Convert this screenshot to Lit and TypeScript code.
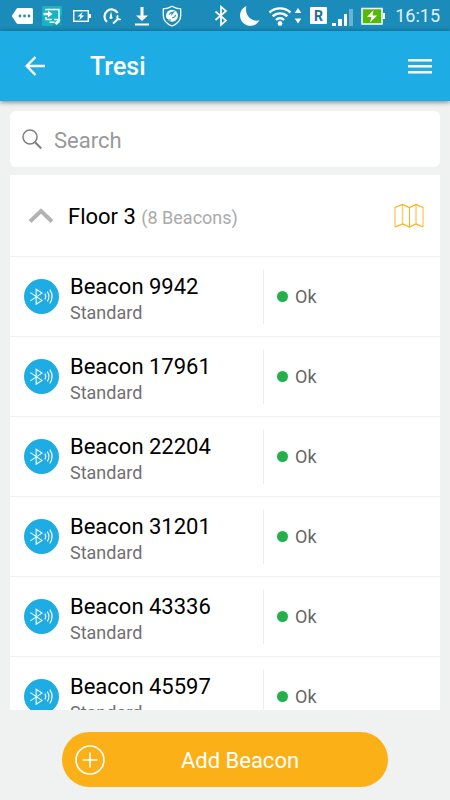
import { LitElement, html, css } from "lit";
import { customElement, property, state } from "lit/decorators.js";

interface Beacon {
  name: string;
  type: string;
  status: string;
}

@customElement("status-bar")
export class StatusBar extends LitElement {
  static styles = css`
    :host {
      display: flex;
      justify-content: space-between;
      align-items: center;
      flex: none;
      height: 31px;
      padding: 0 10px 0 11px;
      background: #1b8cb9;
      color: #fff;
    }
    .group {
      display: flex;
      align-items: center;
      gap: 7px;
    }
    .notices {
      gap: 8px;
    }
    svg {
      display: block;
      flex: none;
    }
    .time {
      font: 400 18px/31px Roboto, sans-serif;
      color: #e4f2f8;
    }
    .roaming {
      font: 700 14px Roboto, sans-serif;
      fill: #1b6f96;
    }
  `;

  render() {
    return html`
      <div class="group notices">
        <svg width="22" height="22" viewBox="0 0 22 22" fill="#fff" aria-hidden="true">
          <path d="M7 3h13.500q1.500 0 1.500 1.500v13q0 1.500-1.500 1.500H7q-1 0-1.600-.9L1.300 12q-.6-1 0-2L5.400 3.900Q6 3 7 3z" />
          <g fill="#1b8cb9"><circle cx="9" cy="11" r="1.400" /><circle cx="13.500" cy="11" r="1.400" /><circle cx="18" cy="11" r="1.400" /></g>
        </svg>
        <svg width="22" height="22" viewBox="0 0 22 22" fill="none" aria-hidden="true">
          <rect x="1" y="1" width="20" height="20" rx="1.500" fill="#18b3c4" />
          <path d="M11 21 21 10V21z" fill="#129fb0" />
          <path d="M5 5.500V4.500h13v10h-5M5 12v2.500h6M8.500 17.300h5" stroke="#fff" stroke-width="1.400" />
          <path d="M2.500 7.700H7V5.500l4.500 3.500L7 12.500V10.300H2.500z" fill="#fff" />
          <path d="M13.500 18l3.500-3.500 2.500 0-1 3-3 2.500z" fill="#e8fafa" />
        </svg>
        <svg width="22" height="22" viewBox="0 0 22 22" fill="none" aria-hidden="true">
          <rect x="2.700" y="5.700" width="14.600" height="10.600" stroke="#fff" stroke-width="1.400" />
          <path d="M18 9h2v4h-2z" fill="#fff" />
          <path d="M11.500 7 6.500 11.500h3L8.300 15l5-4.500h-3z" fill="#fff" />
        </svg>
        <svg width="22" height="22" viewBox="0 0 22 22" fill="none" stroke="#fff" aria-hidden="true">
          <path d="M6 16.800A7 7 0 1 1 16.600 8" stroke-width="2.200" />
          <path d="M10 6.500l1.300 5.500a1.400 1.400 0 1 1-2.600 0z" fill="#fff" stroke="none" />
          <path d="M12 18.500l5.500-5" stroke-width="2" />
          <path d="M17.300 10.600a2 2 0 1 0 2.300 3.200" stroke-width="1.800" />
        </svg>
        <svg width="22" height="22" viewBox="0 0 22 22" fill="#fff" aria-hidden="true">
          <path d="M9.500 2h3v8.500H17l-6 5.500-6-5.500h4.500zM4 18.500h14v2H4z" />
        </svg>
        <svg width="22" height="22" viewBox="0 0 22 22" fill="none" aria-hidden="true">
          <path d="M11 1.200q4 2.600 8.700 2.600v6.700q0 7-8.700 10.500-8.700-3.500-8.700-10.500V3.800Q7 3.800 11 1.200z" stroke="#fff" stroke-width="1.300" />
          <circle cx="11" cy="10.800" r="6" fill="#fff" />
          <path d="M8 9.500q1.500-2.300 4.500-2.500-2 1.500-1.800 3.200M14.500 10q-.5 2.700-3.300 2.700" stroke="#1b8cb9" stroke-width="1.100" />
          <path d="M5.500 14q2 1.700 4.500 1" stroke="#1b8cb9" stroke-width="1" />
        </svg>
      </div>
      <div class="group">
        <svg width="22" height="22" viewBox="0 0 22 22" fill="none" stroke="#fff" stroke-width="1.700" aria-hidden="true">
          <path d="M5.500 6.500 16 15.500 11 19.800V1.700L16 6 5.500 15" />
        </svg>
        <svg width="22" height="22" viewBox="0 0 22 22" fill="#fff" aria-hidden="true">
          <path d="M7.500 1A10.300 10.300 0 1 0 20.500 15.300C12.500 17.500 5 10 7.500 1z" />
        </svg>
        <svg width="34" height="22" viewBox="0 0 34 22" fill="none" stroke="#fff" stroke-width="2.400" aria-hidden="true">
          <path d="M1.500 7.500a15.500 15.500 0 0 1 21 0M4.700 11.300a10.500 10.500 0 0 1 14.600 0M8 15a5.600 5.600 0 0 1 8 0" />
          <circle cx="12" cy="18.500" r="2.400" fill="#fff" stroke="none" />
          <path d="M30 3l3.300 5h-6.600zM30 18.500l3.300-5h-6.600z" fill="#fff" stroke="none" />
        </svg>
        <svg width="45" height="22" viewBox="0 0 45 22" fill="#fff" aria-hidden="true">
          <rect x="1" y="2" width="17" height="17" rx="1" />
          <text class="roaming" x="5" y="16">R</text>
          <path d="M23 18h4v3h-4zM29 14h4v7h-4zM35 9h3v12h-3z" />
          <path d="M40 4h4v17h-4z" opacity=".35" />
        </svg>
        <svg width="27" height="22" viewBox="0 0 27 22" aria-hidden="true">
          <rect x="1" y="3.500" width="20" height="15.500" fill="#55b80c" stroke="#fff" stroke-width="1.500" />
          <path d="M22 8h2v6h-2z" fill="#fff" />
          <path d="M12.500 5 6 12h4.500L9 17.500 16 10.500h-4.500z" fill="#fff" />
        </svg>
        <span class="time">16:15</span>
      </div>
    `;
  }
}

@customElement("beacon-row")
export class BeaconRow extends LitElement {
  @property({ attribute: false }) beacon!: Beacon;

  static styles = css`
    :host {
      display: grid;
      grid-template-columns: 46px 12fr 11fr;
      align-items: center;
      box-sizing: border-box;
      flex: none;
      height: 80px;
      padding-left: 14px;
      border-bottom: 1px solid #f0f2f2;
    }
    .badge {
      width: 35px;
      height: 35px;
    }
    .label {
      min-width: 0;
      padding-top: 4px;
    }
    .name {
      font-size: 22px;
      line-height: 28px;
      color: #000;
    }
    .type {
      font-size: 18px;
      line-height: 24px;
      color: #707070;
    }
    .status {
      display: flex;
      align-items: center;
      box-sizing: border-box;
      height: 55px;
      padding-left: 13px;
      gap: 7px;
      border-left: 1px solid #ececec;
      font-size: 18px;
      color: #666;
    }
    .dot {
      width: 11px;
      height: 11px;
      border-radius: 50%;
      background: #22b04b;
    }
  `;

  render() {
    return html`
      <svg class="badge" viewBox="0 0 36 36" fill="none" stroke="#fff" aria-hidden="true">
        <circle cx="18" cy="18" r="18" fill="#1eace4" stroke="none" />
        <path d="M6.500 14l12 8-6 4V10.500l6 4-12 8" stroke-width="1.100" />
        <path d="M21.500 15q1.800 3 0 6M24 13q3.400 5 0 10M26.500 11q5 7 0 14" stroke-width="1.200" />
      </svg>
      <div class="label">
        <div class="name">${this.beacon.name}</div>
        <div class="type">${this.beacon.type}</div>
      </div>
      <div class="status"><span class="dot"></span><span>${this.beacon.status}</span></div>
    `;
  }
}

@customElement("app-root")
export class AppRoot extends LitElement {
  @state() private beacons: Beacon[] = ["9942", "17961", "22204", "31201", "43336", "45597"].map(
    (id) => ({ name: `Beacon ${id}`, type: "Standard", status: "Ok" })
  );

  static styles = css`
    :host {
      display: flex;
      flex-direction: column;
      height: 100vh;
      overflow: hidden;
      background: #f0f2f2;
      font-family: Roboto, sans-serif;
    }
    button {
      display: flex;
      align-items: center;
      padding: 0;
      border: 0;
      background: none;
      font-family: inherit;
      color: inherit;
      cursor: pointer;
    }
    svg {
      display: block;
      flex: none;
    }
    .toolbar {
      display: flex;
      align-items: center;
      flex: none;
      height: 70px;
      padding: 0 18px 0 24px;
      background: #1eace4;
      color: #fff;
      box-shadow: 0 1px 5px rgba(0, 0, 0, 0.5);
    }
    .title {
      flex: 1;
      margin: 0 0 0 44px;
      padding-top: 2px;
      font-size: 25px;
      line-height: 32px;
      font-weight: 500;
    }
    .search {
      display: flex;
      align-items: center;
      flex: none;
      gap: 12px;
      height: 56px;
      margin: 10px 10px 8px;
      padding: 0 12px;
      border-radius: 6px;
      background: #fff;
    }
    .field {
      flex: 1;
      min-width: 0;
      padding: 4px 0 0;
      border: 0;
      outline: 0;
      background: none;
      font: 400 22px/28px Roboto, sans-serif;
      color: #333;
    }
    .field::placeholder {
      color: #999;
      opacity: 1;
    }
    .list {
      display: flex;
      flex-direction: column;
      flex: 1;
      min-height: 0;
      margin: 0 10px;
      overflow: hidden;
      background: #fff;
    }
    .floor {
      display: flex;
      align-items: center;
      flex: none;
      height: 81px;
      padding: 0 16px 0 18px;
      border-bottom: 1px solid #f0f2f2;
    }
    .heading {
      flex: 1;
      margin: 0 0 0 14px;
      padding-top: 4px;
      font-size: 22px;
      line-height: 28px;
      font-weight: 400;
      color: #000;
    }
    .count {
      font-size: 18px;
      color: #aaa;
    }
    .footer {
      display: flex;
      flex: none;
      justify-content: center;
      padding: 22px 62px 13px;
    }
    .footer .add {
      flex: 1;
      height: 55px;
      padding: 0 13px;
      border-radius: 28px;
      background: #fcb017;
      color: #fff;
      font-size: 22px;
      line-height: 28px;
    }
    .caption {
      flex: 1;
      padding-top: 2px;
    }
  `;

  render() {
    return html`
      <status-bar></status-bar>
      <header class="toolbar">
        <button aria-label="Back">
          <svg width="22" height="22" viewBox="0 0 22 22" fill="none" stroke="#fff" stroke-width="2.400">
            <path d="M11.500 2 2.700 11l8.800 9M3 11h18" />
          </svg>
        </button>
        <h1 class="title">Tresi</h1>
        <button aria-label="Menu">
          <svg width="24" height="18" viewBox="0 0 24 18" fill="#fff">
            <path d="M0 2h24v2.500H0zM0 8h24v2.500H0zM0 14h24v2.500H0z" />
          </svg>
        </button>
      </header>
      <label class="search">
        <svg width="20" height="22" viewBox="0 0 20 22" fill="none" stroke="#808084" aria-hidden="true">
          <circle cx="8" cy="9" r="7" stroke-width="1.500" />
          <path d="M12.800 14 19.300 20.500" stroke-width="2.200" />
        </svg>
        <input class="field" type="text" placeholder="Search" aria-label="Search" />
      </label>
      <main class="list">
        <div class="floor">
          <button aria-label="Collapse floor">
            <svg width="26" height="18" viewBox="0 0 26 18" fill="none" stroke="#b3b3b3" stroke-width="4">
              <path d="M2 14.500 13 4l11 10.500" />
            </svg>
          </button>
          <h2 class="heading">Floor 3 <span class="count">(8 Beacons)</span></h2>
          <button aria-label="Show map">
            <svg width="30" height="26" viewBox="0 0 30 26" fill="none">
              <path d="M1 4v20M8.500 2v19M22 2v19M29 4v20" stroke="#fcb017" stroke-opacity=".6" stroke-width="1.500" />
              <path d="M15.500 4v20" stroke="#fcb017" />
              <path d="M1 4.500 8.500 1.500 15.500 4.500 22 1.500 29 4.500M1 24 8.500 21 15.500 24 22 21 29 24" stroke="#fcb017" stroke-width="1.200" />
            </svg>
          </button>
        </div>
        ${this.beacons.map((b) => html`<beacon-row .beacon=${b}></beacon-row>`)}
      </main>
      <footer class="footer">
        <button class="add">
          <svg width="30" height="30" viewBox="0 0 30 30" fill="none" stroke="#fff" stroke-width="1.600" aria-hidden="true">
            <circle cx="15" cy="15" r="14" />
            <path d="M15 7.500v15M7.500 15h15" />
          </svg>
          <span class="caption">Add Beacon</span>
        </button>
      </footer>
    `;
  }
}
